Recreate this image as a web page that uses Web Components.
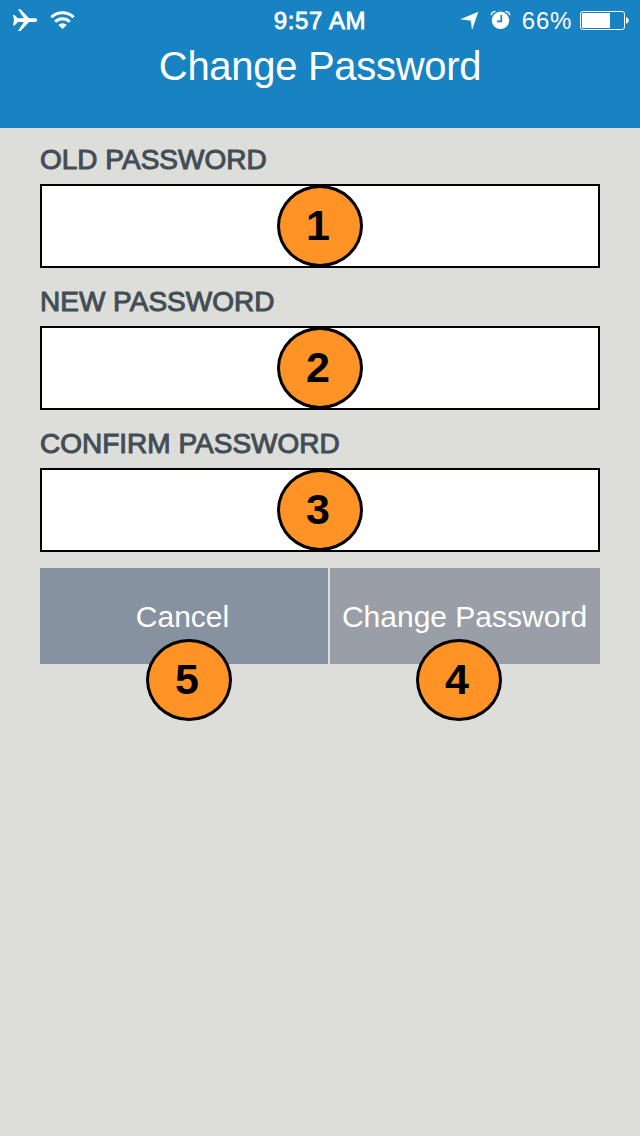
<!DOCTYPE html>
<html lang="en">
<head>
<meta charset="utf-8">
<title>Change Password</title>
<style>
  body { margin: 0; background: #dddeda; font-family: "Liberation Sans", Arial, sans-serif; }
</style>
</head>
<body>
<password-screen></password-screen>
<script>
const define = (name, html) => customElements.define(name, class extends HTMLElement {
  constructor() {
    super();
    const template = document.createElement('template');
    template.innerHTML = html;
    this.attachShadow({ mode: 'open' }).append(template.content.cloneNode(true));
  }
});

define('status-bar', `
<style>
  :host { display: grid; grid-template-columns: 1fr auto 1fr; height: 40px; color: #fff; font-size: 24px; line-height: 40px; }
  .side { display: flex; align-items: flex-start; }
  .left { padding-left: 12px; }
  .right { justify-content: flex-end; padding-right: 10px; }
  svg { display: block; height: 40px; }
  .time { letter-spacing: .6px; -webkit-text-stroke: .8px #fff; margin-top: 1px; }
  .level { letter-spacing: .7px; margin: 1px 8px 0 10px; }
</style>
<div class="side left">
  <svg width="64" height="40" viewBox="12 0 64 40" fill="#fff">
    <path d="M13 15h1.600l3.300 3.300h6L18 9.200h2.500l8.500 9.100h6.100c1.300 0 2 .9 2 1.900s-.7 1.900-2 1.900h-6.100l-8.500 9H18l5.900-9h-6L14.600 25.400H13l1-5.200z"/>
    <path d="M62.500 29l-4.200-4a6 6 0 0 1 8.400 0z"/>
    <g fill="none" stroke="#fff" stroke-width="3"><path d="M51.400 17.300a15.800 15.800 0 0 1 22.200 0"/><path d="M55.200 21.700a10.300 10.300 0 0 1 14.600 0"/></g>
  </svg>
</div>
<div class="time">9:57 AM</div>
<div class="side right">
  <svg width="52" height="40" viewBox="460 0 52 40" fill="#fff">
    <path d="M478.400 11.700L472 30l-1.200-9.300-10.500-1.500z"/>
    <circle cx="500.500" cy="20.300" r="8.700"/>
    <path d="M501.300 15v6.300h-4.300" fill="none" stroke="#1883c2" stroke-width="1.700"/>
    <path d="M491.600 15.200c-.6-1.900.8-3.600 4-3.700M509.400 15.200c.6-1.900-.8-3.600-4-3.700" fill="none" stroke="#fff" stroke-width="1.400"/>
  </svg>
  <span class="level">66%</span>
  <svg width="50" height="40" viewBox="580 0 50 40">
    <rect x="580.500" y="11.500" width="44" height="18" rx="2.500" fill="none" stroke="#fff"/>
    <path fill="#fff" d="M583 13h27v15h-27a1 1 0 0 1-1-1V14a1 1 0 0 1 1-1zM626 17.200c3.700.8 3.700 5.800 0 6.600z"/>
  </svg>
</div>`);

define('nav-header', `
<style>
  :host { display: block; height: 128px; background: #1883c2; color: #fff; }
  h1 { margin: 0; padding-top: 3px; font-size: 40px; font-weight: 400; line-height: 46px; text-align: center; letter-spacing: -.3px; }
</style>
<status-bar></status-bar>
<h1><slot></slot></h1>`);

/* Numbered callout laid over a control */
define('step-marker', `
<style>
  :host { position: absolute; box-sizing: border-box; width: 86px; height: 82px; border: 3px solid #000; border-radius: 50%;
    background: #ff9326; color: #000; font-size: 43px; font-weight: 700; line-height: 74px; text-align: center; letter-spacing: 0; }
  span { position: relative; left: -2px; }
</style>
<span><slot></slot></span>`);

define('password-field', `
<style>
  :host { display: block; height: 142px; }
  .label { height: 56px; box-sizing: border-box; padding-top: 16px; color: #434d55; font-size: 28px; line-height: 32px; white-space: nowrap;
    -webkit-text-stroke: 1px #434d55; }
  .box { position: relative; box-sizing: border-box; height: 84px; border: 2px solid #000; background: #fff; }
  ::slotted(step-marker) { left: 235px; top: -1px; }
</style>
<div class="label"><slot></slot></div>
<div class="box"><slot name="marker"></slot></div>`);

define('action-button', `
<style>
  :host { display: block; position: relative; height: 96px; color: #fff; background: var(--fill); font-size: 30px; line-height: 98px; text-align: center; white-space: nowrap; }
  .text { display: block; padding-right: var(--nudge, 0); }
  ::slotted(step-marker) { top: 71px; left: var(--marker); }
</style>
<span class="text"><slot></slot></span><slot name="marker"></slot>`);

define('password-screen', `
<style>
  :host { display: block; height: 1136px; background: #dddeda; }
  main { padding: 0 40px; }
  .actions { display: grid; grid-template-columns: 288px 270px; gap: 2px; margin-top: 14px; }
  .cancel { --fill: #8792a0; --nudge: 3px; --marker: 106px; }
  .change { --fill: #9a9ea6; --nudge: 1px; --marker: 86px; }
</style>
<nav-header>Change Password</nav-header>
<main>
  <password-field>OLD PASSWORD<step-marker slot="marker">1</step-marker></password-field>
  <password-field>NEW PASSWORD<step-marker slot="marker">2</step-marker></password-field>
  <password-field>CONFIRM PASSWORD<step-marker slot="marker">3</step-marker></password-field>
  <div class="actions">
    <action-button class="cancel">Cancel<step-marker slot="marker">5</step-marker></action-button>
    <action-button class="change">Change Password<step-marker slot="marker">4</step-marker></action-button>
  </div>
</main>`);
</script>
</body>
</html>
